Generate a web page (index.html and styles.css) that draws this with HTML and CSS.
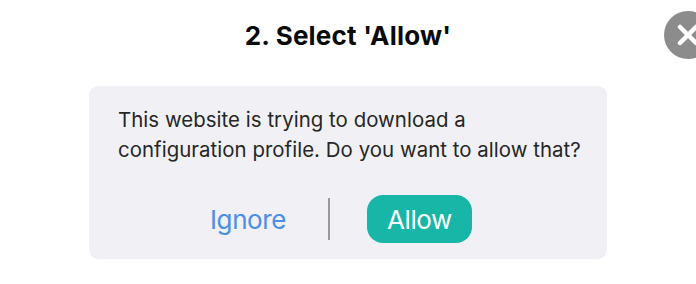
FILE: index.html
```html
<!DOCTYPE html>
<html>
<head>
<meta charset="utf-8">
<link rel="stylesheet" href="styles.css">
</head>
<body>
<div class="page">
  <h1 class="title">2. Select 'Allow'</h1>
  <div class="close" aria-label="Close">
    <svg width="48" height="48" viewBox="0 0 48 48">
      <circle cx="24" cy="24" r="24" fill="#8c8c8c"/>
      <path d="M16 16 L32 32 M32 16 L16 32" stroke="#fff" stroke-width="4.5" stroke-linecap="round"/>
    </svg>
  </div>
  <div class="dialog">
    <p class="message">This website is trying to download a<br>configuration profile. Do you want to allow that?</p>
    <div class="actions">
      <span class="ignore">Ignore</span>
      <span class="divider"></span>
      <span class="allow">Allow</span>
    </div>
  </div>
</div>
</body>
</html>
```
FILE: styles.css
```css
html, body {
  margin: 0;
  padding: 0;
  background: #ffffff;
}
.page {
  position: relative;
  width: 696px;
  height: 284px;
  overflow: hidden;
  font-family: Inter, "Liberation Sans", sans-serif;
}
.title {
  margin: 0;
  padding-top: 19px;
  text-align: center;
  font-size: 26px;
  font-weight: 700;
  line-height: 34px;
  color: #0a0a0a;
  letter-spacing: 0.2px;
}
.close {
  position: absolute;
  left: 664px;
  top: 11px;
  width: 48px;
  height: 48px;
}
.close svg { display: block; }
.dialog {
  margin: 33px 0 0 89px;
  width: 518px;
  height: 173px;
  box-sizing: border-box;
  background: #f1f1f5;
  border-radius: 9px;
  padding: 19px 10px 0 29px;
}
.message {
  margin: 0;
  font-size: 20.4px;
  line-height: 30px;
  color: #262626;
  letter-spacing: 0.05px;
}
.actions {
  display: flex;
  align-items: center;
  margin-top: 30px;
  padding-left: 92px;
}
.ignore {
  font-size: 26px;
  color: #4b8ee6;
  letter-spacing: -0.4px;
}
.divider {
  width: 2px;
  height: 42px;
  background: #9a9a9a;
  margin: 0 37px 0 42px;
}
.allow {
  display: flex;
  align-items: center;
  justify-content: center;
  width: 105px;
  height: 48px;
  border-radius: 16px;
  background: #17b6a7;
  color: #ffffff;
  font-size: 26px;
  letter-spacing: -0.4px;
}
```
